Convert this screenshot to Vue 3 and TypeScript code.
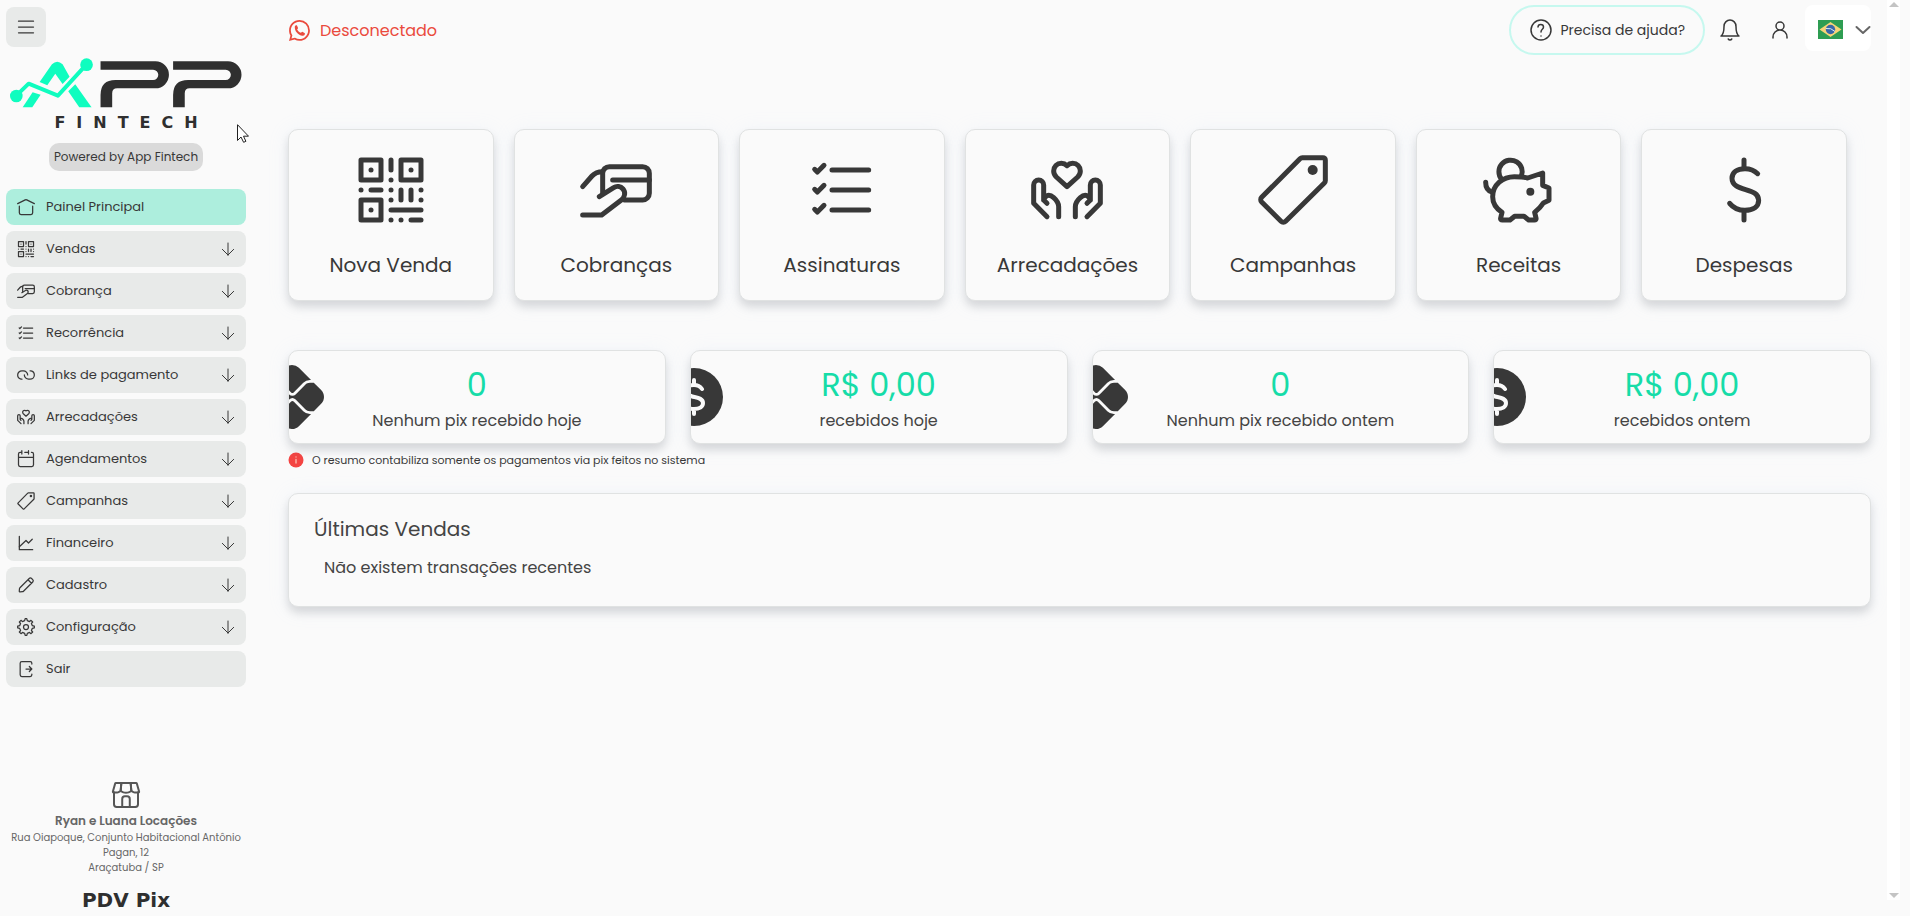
<script setup lang="ts">
interface Shape {
  d: string
  solid?: boolean
}
interface MenuEntry {
  label: string
  icon: string
  expandable: boolean
}
interface Shortcut {
  label: string
  icon: string
}
interface Stat {
  kind: 'pix' | 'coin'
  value: string
  label: string
}

const line = (d: string): Shape => ({ d })
const solid = (d: string): Shape => ({ d, solid: true })

const icons: Record<string, Shape[]> = {
  menu: [line('M3 5h18M3 12h18M3 19h18')],
  home: [
    line('M2 8l9.7-4.85a.6.6 0 01.6 0L22 8'),
    line('M20 11v8a2 2 0 01-2 2H6a2 2 0 01-2-2v-8'),
  ],
  qr: [
    line('M3 3h6v6H3zM15 3h6v6h-6zM3 15h6v6H3z'),
    line('M6 6h.01M18 6h.01M6 18h.01M12 9h.01M3 12h.01M12 12h.01M21 12h.01M12 15h.01M21 15h.01M12 21h.01M15 21h.01'),
    line('M12 3v3M6 12h3M15 12v3M18 12v3M12 18h9M18 21h3'),
  ],
  card: [
    line('M8 13V7a2 2 0 012-2h10a2 2 0 012 2v6a2 2 0 01-2 2h-5.5'),
    line('M11 9h11'),
    line('M2 11l2.8-3.2C5.6 6.9 6.6 6.5 8 6.5'),
    line('M2 19.5h5.7l6-4.6c1-.8 1.2-2.3.4-3.2-.7-.8-1.9-1-2.8-.4L7 14'),
  ],
  list: [
    line('M9 6h11M9 12h11M9 18h11'),
    line('M3.8 5.8l.8.8 2-2M3.8 11.8l.8.8 2-2M3.8 17.8l.8.8 2-2'),
  ],
  link: [
    line('M14 11.998C14 9.506 11.683 7 8.857 7H7.143C4.303 7 2 9.238 2 11.998c0 2.378 1.71 4.368 4 4.873a5.3 5.3 0 001.143.124'),
    line('M10 11.998c0 2.491 2.317 4.997 5.143 4.997h1.714c2.84 0 5.143-2.237 5.143-4.997 0-2.379-1.71-4.37-4-4.874A5.304 5.304 0 0016.857 7'),
  ],
  donate: [
    line('M12 4.7C11.5 4.2 10.9 4 10.3 4 9 4 8 5 8 6.3c0 .7.3 1.3.8 1.8L12 11l3.2-2.9c.5-.5.8-1.1.8-1.8C16 5 15 4 13.7 4c-.6 0-1.2.2-1.7.7z'),
    line('M6 20l-4-4v-5.5a1.5 1.5 0 013 0V15l1 1M5 15c.5-1.6 1.8-1.8 3-.7 1 .9 1.5 1.7 1.5 2.7v3'),
    line('M18 20l4-4v-5.5a1.5 1.5 0 00-3 0V15l-1 1M19 15c-.5-1.6-1.8-1.8-3-.7-1 .9-1.5 1.7-1.5 2.7v3'),
  ],
  calendar: [
    line('M15 4V2m0 2v2m0-2h-4.5M3 10v9a2 2 0 002 2h14a2 2 0 002-2v-9H3zM3 10V6a2 2 0 012-2h2M7 2v4M21 10V6a2 2 0 00-2-2h-.5'),
  ],
  tag: [
    line('M14.8 2.3H21a.7.7 0 01.7.7v6.2a1 1 0 01-.3.7L9.8 21.4a1 1 0 01-1.4 0l-5.8-5.8a1 1 0 010-1.4L14.1 2.6a1 1 0 01.7-.3z'),
    solid('M16.4 6a1.5 1.5 0 103 0 1.5 1.5 0 10-3 0z'),
  ],
  graph: [line('M20 20H4V4'), line('M4 16.5L12 9l3 3 4.5-4.5')],
  pencil: [
    line('M14.363 5.652l1.48-1.48a2 2 0 012.829 0l1.414 1.414a2 2 0 010 2.828l-1.48 1.48m-4.243-4.242l-9.616 9.615a2 2 0 00-.578 1.238l-.242 2.74a1 1 0 001.084 1.085l2.74-.242a2 2 0 001.24-.578l9.615-9.616m-4.243-4.242l4.243 4.242'),
  ],
  gear: [
    line('M12 15a3 3 0 100-6 3 3 0 000 6z'),
    line('M19.622 10.395l-1.097-2.65L20 6l-2-2-1.735 1.483-2.707-1.113L12.935 2h-1.954l-.632 2.401-2.645 1.115L6 4 4 6l1.453 1.789-1.08 2.657L2 11v2l2.401.655L5.516 16.3 4 18l2 2 1.791-1.46 2.606 1.072L11 22h2l.604-2.387 2.651-1.098C16.697 18.831 18 20 18 20l2-2-1.484-1.75 1.098-2.652 2.386-.62V11l-2.378-.605z'),
  ],
  exit: [
    line('M12 12h7m0 0l-3 3m3-3l-3-3M19 6V5a2 2 0 00-2-2H7a2 2 0 00-2 2v14a2 2 0 002 2h10a2 2 0 002-2v-1'),
  ],
  arrow: [line('M12 3v18m0 0l8.5-8.5M12 21l-8.5-8.5')],
  piggy: [
    line('M6.8 8.8A3.5 3.5 0 1112.7 7.9'),
    line('M14.6 8.4l4.5-1.5v3.7l1.9.8v3.7l-1.7.8c-.6 1-1.5 1.9-2.6 2.8l.4 1.7c.1.4-.1.6-.5.6h-1.7l-1.4-1.1h-2.8L9.3 21H7c-.4 0-.6-.2-.5-.6l.4-1.7C5.1 17.5 4.1 15.8 4.1 14c0-3.6 3.1-6 6.5-6 1.4 0 2.7 0 4 .4z'),
    line('M2 9.7c0 1.3.6 2.5 1.8 2.9'),
    solid('M14.2 12.5a1.2 1.2 0 102.4 0 1.2 1.2 0 10-2.4 0z'),
  ],
  dollar: [
    line('M16.1 7.1C15.2 6.2 13.8 5.6 12.3 5.6 9.9 5.6 8.4 6.7 8.4 8.5c0 4.3 8 2.5 8 6.6 0 1.9-1.6 3-4.1 3-1.9 0-3.5-.7-4.6-2.1'),
    line('M12 3v2.5M12 18.2V21'),
  ],
  help: [
    line('M12 22c5.523 0 10-4.477 10-10S17.523 2 12 2 2 6.477 2 12s4.477 10 10 10z'),
    line('M9 9c0-3.5 5.5-3.5 5.5 0 0 2.5-2.5 2-2.5 5M12 18h.01'),
  ],
  bell: [
    line('M18 8.4c0-1.697-.632-3.325-1.757-4.525C15.117 2.675 13.59 2 12 2c-1.591 0-3.117.674-4.243 1.875C6.632 5.075 6 6.703 6 8.4 6 15.867 3 18 3 18h18s-3-2.133-3-9.6zM13.73 21a1.999 1.999 0 01-3.46 0'),
  ],
  user: [
    line('M5 20v-1a7 7 0 017-7v0a7 7 0 017 7v1M12 12a4 4 0 100-8 4 4 0 000 8z'),
  ],
  chevron: [line('M5.5 9l6.500 6 6.500-6')],
  shop: [
    line('M3 10v9a2 2 0 002 2h14a2 2 0 002-2v-9M14.833 21v-6a2 2 0 00-2-2h-1.666a2 2 0 00-2 2v6'),
    line('M21.818 9.364l-1.694-5.929A.6.6 0 0019.547 3H15.5l.475 5.704a.578.578 0 00.278.45c.39.233 1.152.662 1.747.846 1.016.313 2.5.2 3.346.096a.57.57 0 00.472-.732z'),
    line('M14 10c.568-.175 1.288-.574 1.69-.812a.578.578 0 00.28-.549L15.5 3h-7l-.47 5.639a.578.578 0 00.28.55c.402.237 1.122.636 1.69.811 1.493.46 2.507.46 4 0z'),
    line('M3.876 3.435l-1.694 5.93a.57.57 0 00.472.73c.845.105 2.33.217 3.346-.095.595-.184 1.357-.613 1.747-.845a.578.578 0 00.278-.451L8.5 3H4.453a.6.6 0 00-.577.435z'),
  ],
}

const menu: MenuEntry[] = [
  { label: 'Painel Principal', icon: 'home', expandable: false },
  { label: 'Vendas', icon: 'qr', expandable: true },
  { label: 'Cobrança', icon: 'card', expandable: true },
  { label: 'Recorrência', icon: 'list', expandable: true },
  { label: 'Links de pagamento', icon: 'link', expandable: true },
  { label: 'Arrecadações', icon: 'donate', expandable: true },
  { label: 'Agendamentos', icon: 'calendar', expandable: true },
  { label: 'Campanhas', icon: 'tag', expandable: true },
  { label: 'Financeiro', icon: 'graph', expandable: true },
  { label: 'Cadastro', icon: 'pencil', expandable: true },
  { label: 'Configuração', icon: 'gear', expandable: true },
  { label: 'Sair', icon: 'exit', expandable: false },
]

const shortcuts: Shortcut[] = [
  { label: 'Nova Venda', icon: 'qr' },
  { label: 'Cobranças', icon: 'card' },
  { label: 'Assinaturas', icon: 'list' },
  { label: 'Arrecadações', icon: 'donate' },
  { label: 'Campanhas', icon: 'tag' },
  { label: 'Receitas', icon: 'piggy' },
  { label: 'Despesas', icon: 'dollar' },
]

const stats: Stat[] = [
  { kind: 'pix', value: '0', label: 'Nenhum pix recebido hoje' },
  { kind: 'coin', value: 'R$ 0,00', label: 'recebidos hoje' },
  { kind: 'pix', value: '0', label: 'Nenhum pix recebido ontem' },
  { kind: 'coin', value: 'R$ 0,00', label: 'recebidos ontem' },
]
</script>

<template>
  <div class="app">
    <aside class="sidebar">
      <button class="toggle" type="button" aria-label="Menu">
        <svg class="icon" viewBox="0 0 24 24" aria-hidden="true">
          <path v-for="(s, i) in icons.menu" :key="i" :d="s.d" />
        </svg>
      </button>

      <div class="brand">
        <svg class="brand-mark" viewBox="30 174 700 150" role="img" aria-label="App">
          <g class="brand-accent">
            <path d="M119 246L156 193Q172 177 188 193L209 230L188 252L166 221L142 256Z" />
            <path d="M98 277L122 284L97 322H68Z" />
            <path d="M226 253L275 322H238L205 274Z" />
            <path class="brand-line" d="M49 287L86 251L174 287L260 193" />
            <circle cx="49" cy="288" r="19" />
            <circle cx="260" cy="194" r="19" />
          </g>
          <path d="M302 184H467a40 40 0 0 1 0 81H352q-15 0-15 15V322H302V285q0-45 45-45H460a15 15 0 0 0 0-31H302Z" />
          <path d="M520 184H685a40 40 0 0 1 0 81H570q-15 0-15 15V322H520V285q0-45 45-45H678a15 15 0 0 0 0-31H520Z" />
        </svg>
        <span class="brand-sub">FINTECH</span>
        <span class="powered">Powered by App Fintech</span>
      </div>

      <nav class="menu">
        <component
          :is="item.expandable ? 'button' : 'a'"
          v-for="(item, n) in menu"
          :key="item.label"
          class="menu-item"
          :class="{ active: n === 0 }"
          :type="item.expandable ? 'button' : undefined"
          :href="item.expandable ? undefined : '#'"
        >
          <svg class="icon" viewBox="0 0 24 24" aria-hidden="true">
            <path v-for="(s, i) in icons[item.icon]" :key="i" :d="s.d" :class="{ solid: s.solid }" />
          </svg>
          <span class="menu-label">{{ item.label }}</span>
          <svg v-if="item.expandable" class="icon icon-small" viewBox="0 0 24 24" aria-hidden="true">
            <path v-for="(s, i) in icons.arrow" :key="i" :d="s.d" />
          </svg>
        </component>
      </nav>

      <footer class="store">
        <svg class="icon icon-store" viewBox="0 0 24 24" aria-hidden="true">
          <path v-for="(s, i) in icons.shop" :key="i" :d="s.d" />
        </svg>
        <strong class="store-name">Ryan e Luana Locações</strong>
        <address class="store-address">
          Rua Oiapoque, Conjunto Habitacional Antônio Pagan, 12<br />Araçatuba / SP
        </address>
        <span class="product">PDV Pix</span>
      </footer>

      <svg class="pointer" viewBox="0 0 12 19" aria-hidden="true">
        <path d="M.5.7V16.5L4 13l2.6 5.300 2.300-1L6.500 12.200h5z" />
      </svg>
    </aside>

    <main class="main">
      <header class="topbar">
        <a class="status" href="#">
          <svg class="whatsapp" viewBox="0 0 16 16" aria-hidden="true">
            <path d="M13.601 2.326A7.854 7.854 0 0 0 7.994 0C3.627 0 .068 3.558.064 7.926c0 1.399.366 2.76 1.057 3.965L0 16l4.204-1.102a7.933 7.933 0 0 0 3.79.965h.004c4.368 0 7.926-3.558 7.93-7.93A7.898 7.898 0 0 0 13.6 2.326zM7.994 14.521a6.573 6.573 0 0 1-3.356-.92l-.24-.144-2.494.654.666-2.433-.156-.251a6.56 6.56 0 0 1-1.007-3.505c0-3.626 2.957-6.584 6.591-6.584a6.56 6.56 0 0 1 4.66 1.931 6.557 6.557 0 0 1 1.928 4.66c-.004 3.639-2.961 6.592-6.592 6.592z" />
            <path d="M4.5 4.6c.4-.6 1-.8 1.5-.6l.9 2c0 .5-.6.8-.7 1.2.6 1.2 1.5 2.1 2.8 2.6.4-.1.7-.8 1.2-.8l1.9 1c.2.6-.2 1.4-.9 1.8-3.2 1-7.5-3.2-6.7-7.2z" />
          </svg>
          Desconectado
        </a>
        <div class="actions">
          <button class="help" type="button">
            <svg class="icon icon-large" viewBox="0 0 24 24" aria-hidden="true">
              <path v-for="(s, i) in icons.help" :key="i" :d="s.d" />
            </svg>
            Precisa de ajuda?
          </button>
          <button class="round" type="button" aria-label="Notificações">
            <svg class="icon icon-large" viewBox="0 0 24 24" aria-hidden="true">
              <path v-for="(s, i) in icons.bell" :key="i" :d="s.d" />
            </svg>
          </button>
          <button class="round" type="button" aria-label="Perfil">
            <svg class="icon icon-large" viewBox="0 0 24 24" aria-hidden="true">
              <path v-for="(s, i) in icons.user" :key="i" :d="s.d" />
            </svg>
          </button>
          <button class="language" type="button" aria-label="Idioma" aria-haspopup="listbox">
            <svg class="flag" viewBox="0 0 25 19" aria-hidden="true">
              <rect width="25" height="19" fill="#2e9d52" />
              <path d="M1.5 9.5L12.5 2l11 7.5-11 7.5z" fill="#f8d477" />
              <circle cx="12.5" cy="9.5" r="4.7" fill="#3a67a8" />
              <path d="M8 8.5q5-1 9 3" fill="none" stroke="#dfe8f2" />
            </svg>
            <svg class="icon icon-large icon-grey" viewBox="0 0 24 24" aria-hidden="true">
              <path v-for="(s, i) in icons.chevron" :key="i" :d="s.d" />
            </svg>
          </button>
        </div>
      </header>

      <section class="shortcuts">
        <button v-for="item in shortcuts" :key="item.label" class="card shortcut" type="button">
          <svg class="icon icon-hero" viewBox="0 0 24 24" aria-hidden="true">
            <path v-for="(s, i) in icons[item.icon]" :key="i" :d="s.d" :class="{ solid: s.solid }" />
          </svg>
          <span>{{ item.label }}</span>
        </button>
      </section>

      <section class="stats">
        <article v-for="item in stats" :key="item.label" class="card stat">
          <svg v-if="item.kind === 'pix'" class="stat-badge" viewBox="1 1 14 14" aria-hidden="true">
            <path d="M11.917 11.71a2.046 2.046 0 0 1-1.454-.602l-2.1-2.1a.4.4 0 0 0-.551 0l-2.108 2.108a2.044 2.044 0 0 1-1.454.602h-.414l2.66 2.66c.83.83 2.177.83 3.007 0l2.667-2.668zM4.25 4.282c.55 0 1.066.214 1.454.602l2.108 2.108a.39.39 0 0 0 .552 0l2.1-2.1a2.044 2.044 0 0 1 1.453-.602h.253L9.503 1.623a2.127 2.127 0 0 0-3.007 0l-2.66 2.66z" />
            <path d="M14.377 6.496l-1.612-1.612a.307.307 0 0 1-.114.023h-.733c-.379 0-.75.154-1.017.422l-2.1 2.1a1.005 1.005 0 0 1-1.425 0L5.268 5.32a1.448 1.448 0 0 0-1.018-.422h-.9a.306.306 0 0 1-.109-.021L1.623 6.496c-.83.83-.83 2.177 0 3.008l1.618 1.618a.305.305 0 0 1 .108-.022h.901c.38 0 .75-.153 1.018-.421L7.375 8.57a1.034 1.034 0 0 1 1.426 0l2.1 2.1c.267.268.638.421 1.017.421h.733c.04 0 .079.01.114.024l1.612-1.612c.83-.83.83-2.178 0-3.008z" />
          </svg>
          <svg v-else class="stat-badge" viewBox="0 0 64 64" aria-hidden="true">
            <circle cx="32" cy="32" r="29" />
            <path class="coin-sign" d="M40 24c-2-3-5-4-8-4-5 0-8 2-8 6 0 8 17 4 17 12 0 4-4 6-9 6-4 0-7-1-9-4M32 15v5M32 44v5" />
          </svg>
          <strong class="stat-value">{{ item.value }}</strong>
          <span class="stat-label">{{ item.label }}</span>
        </article>
      </section>

      <p class="note">
        <svg class="note-icon" viewBox="0 0 16 16" aria-hidden="true">
          <circle cx="8" cy="8" r="7.5" fill="#f44442" />
          <path d="M8 5h.01M8 7.5v3.5" stroke="#fbb0a4" stroke-width="1.5" stroke-linecap="round" />
        </svg>
        O resumo contabiliza somente os pagamentos via pix feitos no sistema
      </p>

      <section class="card recent">
        <h2>Últimas Vendas</h2>
        <p>Não existem transações recentes</p>
      </section>
    </main>

    <div class="scroll-track" aria-hidden="true">
      <i class="tip up"></i>
      <i class="tip down"></i>
    </div>
  </div>
</template>

<style>
body {
  margin: 0;
  background: #fafafa;
}
</style>

<style scoped>
* {
  box-sizing: border-box;
}
.app {
  display: flex;
  min-height: 100vh;
  padding-right: 10px;
  background: #fafafa;
  color: #383838;
  font-family: Poppins, Inter, "Open Sans", sans-serif;
  font-size: 13px;
}
button {
  border: 0;
  background: none;
  padding: 0;
  color: inherit;
  font: inherit;
  cursor: pointer;
}
a {
  color: inherit;
  text-decoration: none;
}
svg {
  display: block;
  flex: none;
}

.icon {
  width: 20px;
  height: 20px;
  fill: none;
  stroke: #383838;
  stroke-width: 1.5;
  stroke-linecap: round;
  stroke-linejoin: round;
}
.icon .solid {
  fill: #383838;
  stroke: none;
}
.icon-small {
  width: 16px;
  height: 16px;
}
.icon-large {
  width: 24px;
  height: 24px;
}
.icon-store {
  width: 32px;
  height: 32px;
  stroke: #555;
}
.icon-grey {
  stroke: #666;
  stroke-width: 2;
}
.icon-hero {
  width: 80px;
  height: 80px;
}

.sidebar {
  position: relative;
  display: flex;
  flex: none;
  flex-direction: column;
  width: 252px;
  padding: 7px 6px 5px;
}
.toggle {
  display: grid;
  place-items: center;
  width: 40px;
  height: 40px;
  border-radius: 8px;
  background: #e8eae9;
}
.brand {
  display: flex;
  flex-direction: column;
  align-items: center;
  margin-top: 11px;
}
.brand-mark {
  width: 233px;
  height: 50px;
  fill: #2f2f2f;
}
.brand-accent {
  fill: #0ffdbf;
}
.brand-line {
  fill: none;
  stroke: #0ffdbf;
  stroke-width: 12;
  stroke-linejoin: round;
}
.brand-sub {
  margin-top: 6px;
  padding-left: 11px;
  color: #2f2f2f;
  font: bold 16px/18px "DejaVu Sans", sans-serif;
  letter-spacing: 11px;
}
.powered {
  margin-top: 11px;
  padding: 0 5px;
  border-radius: 10px;
  background: #dadada;
  font-size: 12px;
  line-height: 28px;
}
.menu {
  display: flex;
  flex-direction: column;
  gap: 6px;
  margin-top: 18px;
}
.menu-item {
  display: flex;
  align-items: center;
  gap: 10px;
  height: 36px;
  padding: 0 10px;
  border-radius: 8px;
  background: #e8eae9;
  text-align: left;
}
.menu-item.active {
  background: #adeedd;
}
.menu-label {
  flex: 1;
}
.store {
  display: flex;
  flex-direction: column;
  align-items: center;
  margin-top: auto;
  color: #666;
  text-align: center;
}
.store-name {
  margin-top: 1px;
  font-size: 12px;
  font-weight: 600;
  line-height: 18px;
}
.store-address {
  font-size: 10px;
  font-style: normal;
  line-height: 15px;
}
.product {
  margin-top: 14px;
  color: #2f2f2f;
  font: bold 20px/22px "DejaVu Sans", sans-serif;
}
.pointer {
  position: absolute;
  top: 124px;
  left: 237px;
  width: 12px;
  height: 19px;
  fill: #fff;
  stroke: #222;
}

.main {
  display: flex;
  flex: 1;
  flex-direction: column;
  min-width: 0;
  padding: 5px 16px 24px 36px;
}
.topbar {
  display: flex;
  align-items: center;
  justify-content: space-between;
  height: 50px;
}
.status {
  display: flex;
  align-items: center;
  gap: 10px;
  padding-left: 1px;
  color: #ea4a3d;
  font-size: 16px;
}
.whatsapp {
  width: 21px;
  height: 21px;
  fill: currentColor;
}
.actions {
  display: flex;
  align-items: center;
}
.help {
  display: flex;
  align-items: center;
  gap: 7px;
  height: 50px;
  padding: 0 18px;
  border: 2px solid #c6f8ef;
  border-radius: 25px;
  font-size: 14px;
}
.round {
  display: grid;
  place-items: center;
  width: 50px;
  height: 50px;
}
.language {
  display: flex;
  align-items: center;
  justify-content: space-between;
  width: 66px;
  height: 46px;
  margin-bottom: 4px;
  padding: 3px 0 0 13px;
  border-radius: 8px;
  background: #fff;
}
.language .icon {
  margin-right: -4px;
}
.flag {
  width: 25px;
  height: 19px;
}

.card {
  border: 1px solid #e0e2e2;
  border-radius: 10px;
  background: #fafafa;
  box-shadow:
    0 6px 10px rgba(0, 0, 0, 0.13),
    0 2px 20px rgba(190, 220, 255, 0.16);
}
.shortcuts {
  display: grid;
  grid-template-columns: repeat(7, 1fr);
  gap: 20px;
  margin: 74px 24px 0 0;
}
.shortcut {
  display: flex;
  flex-direction: column;
  align-items: center;
  gap: 20px;
  height: 172px;
  padding-top: 20px;
  font-size: 20px;
  line-height: 30px;
}
.stats {
  display: grid;
  grid-template-columns: repeat(4, 1fr);
  gap: 24px;
  margin-top: 49px;
}
.stat {
  position: relative;
  display: flex;
  flex-direction: column;
  align-items: center;
  height: 94px;
  padding-top: 14px;
  overflow: hidden;
}
.stat-badge {
  position: absolute;
  top: 14px;
  left: -29px;
  width: 64px;
  height: 64px;
  fill: #383838;
}
.coin-sign {
  fill: none;
  stroke: #fafafa;
  stroke-width: 4;
  stroke-linecap: round;
}
.stat-value {
  color: #16dca8;
  font-size: 32px;
  font-weight: 400;
  line-height: 40px;
}
.stat-label {
  color: #444;
  font-size: 16px;
  line-height: 32px;
}
.note {
  display: flex;
  align-items: center;
  gap: 8px;
  margin: 8px 0 0;
  font-size: 11px;
  line-height: 16px;
}
.note-icon {
  width: 16px;
  height: 16px;
}
.recent {
  margin-top: 25px;
  padding: 20px 25px 24px;
  color: #444;
}
.recent h2 {
  margin: 0;
  font-size: 20px;
  font-weight: 400;
  line-height: 30px;
}
.recent p {
  margin: 10px 0 0 10px;
  font-size: 16px;
  line-height: 28px;
}

.scroll-track {
  display: flex;
  flex: none;
  flex-direction: column;
  align-items: center;
  justify-content: space-between;
  width: 13px;
  margin-bottom: 16px;
  padding: 2px 0;
  background: #fff;
}
.tip {
  border: 5px solid transparent;
}
.up {
  border-top: 0;
  border-bottom-color: #c4c4c4;
}
.down {
  border-top-color: #c4c4c4;
  border-bottom: 0;
}
</style>
